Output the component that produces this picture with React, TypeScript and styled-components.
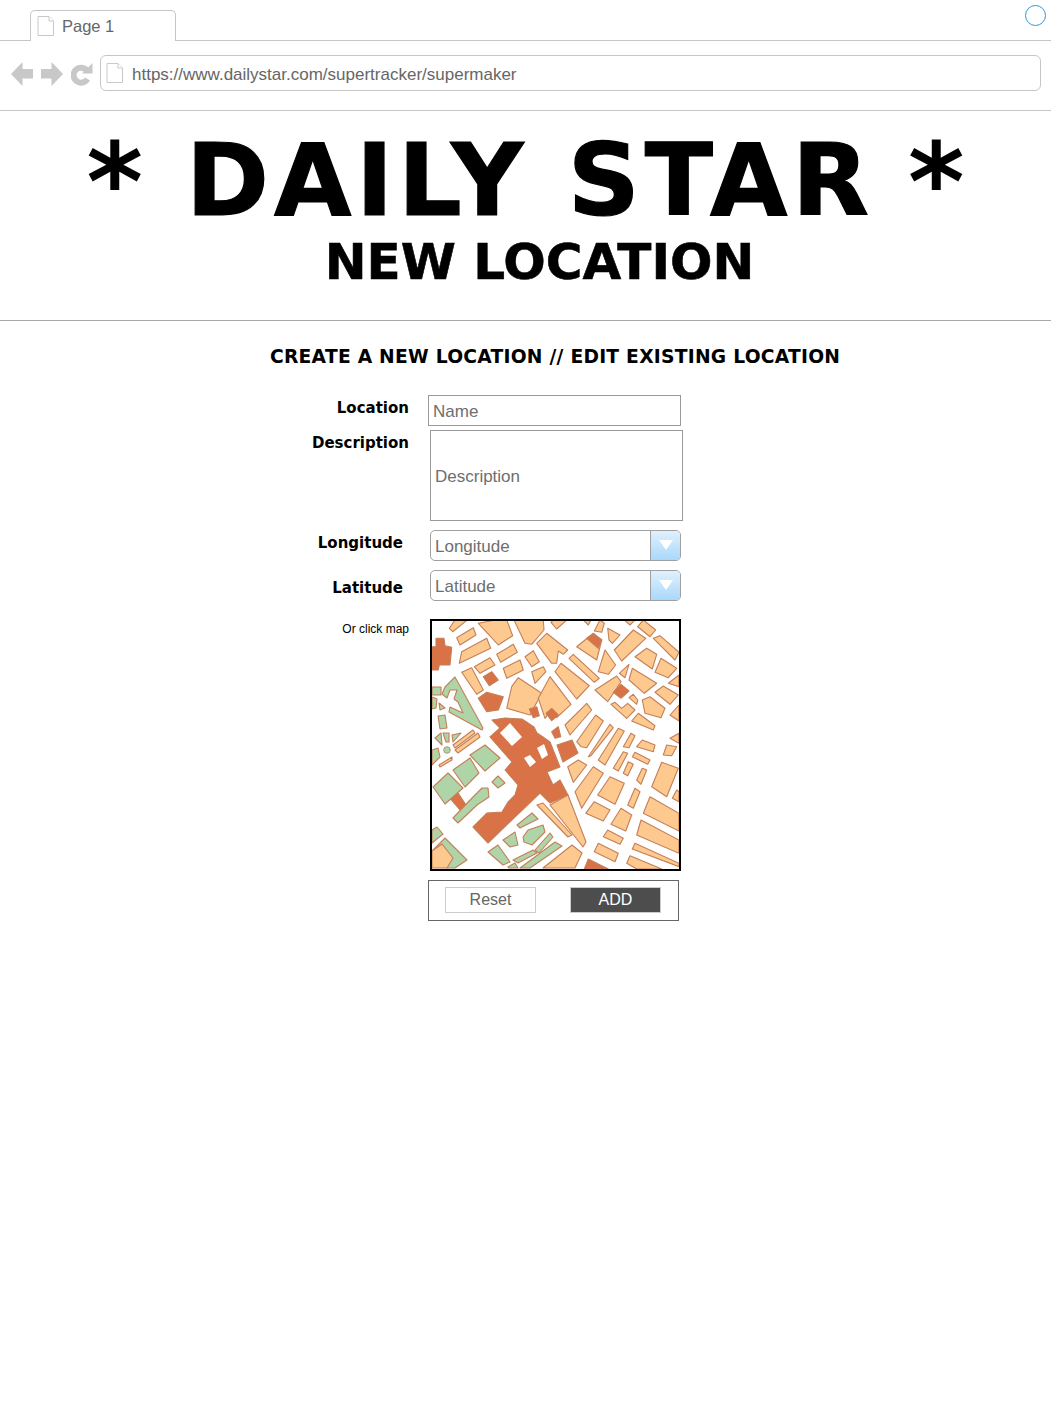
import React from 'react'
import styled, { createGlobalStyle } from 'styled-components'

const GlobalStyle = createGlobalStyle`
  html, body {
    margin: 0;
    padding: 0;
    background: #fff;
  }
  * {
    box-sizing: border-box;
  }
`

const Page = styled.div`
  width: 1051px;
  min-height: 1401px;
  font-family: 'Liberation Sans', Arial, sans-serif;
  background: #fff;
`

// browser chrome
const TabStrip = styled.div`
  height: 41px;
  padding: 10px 5px 0 30px;
  display: flex;
  justify-content: space-between;
  align-items: flex-start;
  border-bottom: 1px solid #c6c6c6;
`

const Tab = styled.div`
  width: 146px;
  height: 31px;
  display: flex;
  align-items: center;
  gap: 8px;
  padding: 0 0 0 6px;
  background: #fff;
  border: 1px solid #c6c6c6;
  border-bottom: none;
  border-radius: 5px 5px 0 0;
  color: #666;
  font-size: 16.5px;
`

const StatusRing = styled.div`
  width: 21px;
  height: 21px;
  margin-top: -5px;
  border: 1.5px solid #2f95d8;
  border-radius: 50%;
`

const AddressRow = styled.div`
  height: 70px;
  display: flex;
  align-items: center;
  padding: 0 10px 5px 11px;
  border-bottom: 1px solid #c6c6c6;
`

const NavIcons = styled.div`
  display: flex;
  align-items: center;
  gap: 8px;
  width: 89px;
  flex: none;
  margin-top: 2px;
`

const AddressBar = styled.div`
  flex: 1;
  height: 36px;
  display: flex;
  align-items: center;
  gap: 9px;
  padding: 0 0 0 5px;
  border: 1px solid #c6c6c6;
  border-radius: 6px;
  color: #666;
  font-size: 17px;

  span {
    margin-top: 3px;
  }
`

// masthead
const Masthead = styled.header`
  height: 210px;
  border-bottom: 1px solid #a8a8a8;
  font-family: 'DejaVu Sans', Verdana, sans-serif;
  font-weight: 700;
  color: #000;
  text-align: center;
`

const TitleRow = styled.div`
  display: flex;
  justify-content: center;
  align-items: flex-start;
  gap: 38px;
  height: 121px;
  padding-top: 20px;
  font-size: 100px;
  line-height: 100px;
`

const TitleText = styled.span`
  letter-spacing: 4.8px;
  margin-right: -4px;
  -webkit-text-stroke: 1.2px #000;
`

const Star = styled.span<{ $nudge: number }>`
  padding-top: 3px;
  margin-right: ${p => p.$nudge}px;
  font-size: 108px;
  line-height: 98px;
`

const SubTitle = styled.div`
  margin: 5px 0 0 28px;
  font-size: 50px;
  line-height: 50px;
  -webkit-text-stroke: 0.6px #000;
`

const Section = styled.h2`
  margin: 24px 0 0;
  padding-left: 270px;
  font-family: 'DejaVu Sans', Verdana, sans-serif;
  font-size: 18.7px;
  line-height: 24px;
  font-weight: 700;
  letter-spacing: 0.25px;
  color: #000;
  white-space: nowrap;
`

const Form = styled.div`
  margin-top: 26px;
`

const Row = styled.div<{ $top: number; $height: number; $labelEnd: number; $fieldStart: number }>`
  display: flex;
  align-items: flex-start;
  margin-top: ${p => p.$top}px;
  height: ${p => p.$height}px;
  padding-left: 200px;

  & > :first-child {
    width: ${p => p.$labelEnd - 200}px;
  }
  & > :last-child {
    margin-left: ${p => p.$fieldStart - p.$labelEnd}px;
  }
`

const Label = styled.div<{ $offset: number }>`
  padding-top: ${p => p.$offset}px;
  font-family: 'DejaVu Sans', Verdana, sans-serif;
  font-size: 15px;
  line-height: 20px;
  font-weight: 700;
  color: #000;
  text-align: right;
`

const MapLabel = styled.div`
  padding-top: 2px;
  font-size: 12px;
  line-height: 16px;
  color: #000;
  text-align: right;
`

const TextField = styled.div`
  width: 253px;
  height: 31px;
  display: flex;
  align-items: center;
  padding: 3px 0 0 4px;
  border: 1px solid #999;
  color: #6e6e6e;
  font-size: 17px;
`

const TextArea = styled(TextField)`
  height: 91px;
`

const Select = styled.div`
  width: 251px;
  height: 31px;
  display: flex;
  align-items: center;
  justify-content: space-between;
  padding-left: 4px;
  border: 1px solid #a0a0a0;
  border-radius: 5px;
  overflow: hidden;
  color: #6e6e6e;
  font-size: 17px;

  span {
    padding-top: 2px;
  }
`

const SelectArrow = styled.div`
  width: 30px;
  height: 100%;
  display: flex;
  align-items: center;
  justify-content: center;
  padding-bottom: 2px;
  border-left: 1px solid #a0a0a0;
  background: linear-gradient(#e0f0fd, #a9d8fb);
`

const MapFrame = styled.div`
  width: 251px;
  height: 252px;
  border: 2px solid #000;
  overflow: hidden;
  background: #fff;

  svg {
    display: block;
  }
`

const ButtonBox = styled.div`
  width: 251px;
  height: 41px;
  display: flex;
  align-items: center;
  justify-content: space-between;
  padding: 0 17px 1px 16px;
  border: 1px solid #666;
`

const ResetButton = styled.div`
  width: 91px;
  height: 26px;
  display: flex;
  align-items: center;
  justify-content: center;
  border: 1px solid #ccc;
  color: #666;
  font-size: 16px;
`

const AddButton = styled(ResetButton)`
  background: #4d4d4d;
  color: #fff;
`

const PageIcon = () => (
  <svg width="17" height="20" viewBox="0 0 17 20" fill="#fff" stroke="#c9c9c9" strokeWidth="1">
    <path d="M1 .5h11l4.500 4.500v14.500h-15.500z" />
    <path d="M12 .5v4.500h4.500" />
  </svg>
)

const NavArrow = ({ flip }: { flip?: boolean }) => (
  <svg width="22" height="24" viewBox="0 0 22 24" fill="#c8c8c8" style={flip ? { transform: 'scaleX(-1)' } : undefined}>
    <path d="M0 12 11.500 0v7h10.500v9.500h-10.500v7.500z" />
  </svg>
)

const ReloadIcon = () => (
  <svg width="22" height="24" viewBox="0 0 22 24">
    <path d="M15.700 8.200a7.500 7.500 0 1 0 .8 8.800" fill="none" stroke="#c8c8c8" strokeWidth="6" />
    <path d="M11 11.500h10.500v-10.500z" fill="#c8c8c8" />
  </svg>
)

// map shapes. Most are written at 3x from the origin of the quadrant they were measured in
type Quad = { ox: number; oy: number; tone: string; scale?: number; shapes: string[] }

const toPoints = ({ ox, oy, scale = 3 }: Quad, shape: string) =>
  shape
    .split(' ')
    .map(pair => {
      const [x, y] = pair.split(',').map(Number)
      return `${(ox + x / scale).toFixed(1)},${(oy + y / scale).toFixed(1)}`
    })
    .join(' ')

const ORANGE = '#fdc98e'
const DARK = '#d97246'
const GREEN = '#aed4a8'
const WHITE = '#ffffff'

const QUADS: Quad[] = [
  {
    ox: 430, oy: 615, tone: ORANGE, shapes: [
      '58,40 75,15 112,15 68,50', '80,68 130,38 138,60 90,90',
      '145,25 195,15 230,15 248,62 205,90 168,50', '88,145 95,110 170,70 182,100',
      '200,118 250,88 262,112 212,142', '133,155 180,128 195,150 150,175',
      '220,160 270,135 280,165 230,190', '95,172 125,158 160,225 140,238',
      '252,15 340,15 342,45 305,88 285,85', '285,125 310,107 328,140 305,155',
      '320,85 350,55 413,105 400,118 385,108 380,145 365,145', '305,170 340,155 348,170 315,205',
      '230,280 245,215 265,188 335,235 300,300', '325,250 360,185 423,268 380,308 365,283 345,310',
    ],
  },
  {
    ox: 555, oy: 615, tone: ORANGE, shapes: [
      '-12,22 -5,15 35,15 5,42', '85,15 108,15 100,30', '118,48 135,15 148,25 140,52',
      '158,40 195,60 172,85 162,75', '65,95 115,55 140,75 125,135',
      '178,105 235,45 272,70 200,138', '208,15 240,15 225,30', '248,35 265,15 302,45 285,65',
      '295,70 315,62 372,112 360,135', '240,125 275,100 305,118 292,162',
      '300,172 318,130 365,160 340,188', '42,130 55,118 133,190 118,202',
      '0,170 18,145 103,212 65,252', '130,170 150,105 182,150 160,178', '193,175 222,148 210,188',
      '222,195 232,160 305,205 268,235', '340,205 372,180 372,215', '120,225 185,183 198,200 158,260',
      '300,232 325,213 370,240 345,268', '222,248 235,238 248,255 245,268',
      '262,255 285,245 330,280 318,308 270,295', '168,268 180,262 200,280 218,265 240,285 215,310',
      '230,318 250,295 300,332 295,345', '30,330 95,265 110,285 45,360',
      '65,380 122,300 145,318 95,398 78,395', '100,425 165,328 175,338 108,422',
      '130,435 190,340 208,348 150,450', '205,395 228,355 240,362 222,398',
      '245,395 262,375 300,390 295,410', '345,300 372,270 372,318', '345,370 372,355 372,385',
    ],
  },
  {
    ox: 555, oy: 745, tone: ORANGE, shapes: [
      '175,70 205,20 218,25 190,78', '205,85 220,50 235,58 218,92', '245,105 262,70 275,75 258,118',
      '232,35 240,22 285,45 278,58', '325,30 335,0 365,5 350,32', '290,125 320,52 370,70 335,155',
      '352,160 365,135 372,140 372,170', '38,65 70,45 95,60 55,112', '60,140 115,65 145,85 80,190',
      '128,150 165,95 208,115 180,178', '218,180 240,130 255,140 235,190', '92,205 118,170 165,195 145,228',
      '168,238 198,190 230,210 212,258', '265,205 285,155 372,205 372,258', '245,270 258,225 372,285 372,325',
      '232,312 240,295 372,355 372,365', '215,355 225,332 320,372 245,372', '145,275 158,255 205,280 195,298',
      '118,320 130,295 190,325 180,350',
    ],
  },
  {
    ox: 555, oy: 615, tone: DARK, shapes: ['95,70 115,57 140,75 130,100', '175,232 198,208 222,228 198,250'],
  },
  {
    ox: 430, oy: 615, tone: DARK, shapes: [
      '5,95 18,95 18,70 42,70 45,92 65,97 60,150 28,150 25,165 5,165', '160,185 185,170 205,195 178,212',
      '145,250 170,232 220,245 205,285 170,290', '298,282 320,275 328,302 310,308',
      '348,295 365,280 385,300 365,317', '365,350 385,335 392,365 375,370',
    ],
  },
  {
    ox: 430, oy: 745, tone: DARK, shapes: ['60,160 85,145 108,180 90,195'],
  },
  {
    ox: 555, oy: 745, tone: DARK, shapes: ['88,372 100,342 160,372'],
  },
  {
    // the main building and what belongs to it, in page pixels
    ox: 0, oy: 0, scale: 1, tone: DARK, shapes: [
      '492,720 505,718 522,719 534,727 537,733 543,737 550,742 560,767 547,772 553,785 560,780 568,795 550,803 540,793 488,843 473,827 487,813 502,812 508,802 515,795 518,785 505,770 512,762 490,737 500,728',
      '557,745 572,740 578,753 563,762',
    ],
  },
  {
    ox: 0, oy: 0, scale: 1, tone: WHITE, shapes: [
      '500,733 510,723 522,737 512,746', '524,758 530,755 536,762 530,767', '537,748 544,744 548,755 542,759',
    ],
  },
  {
    ox: 0, oy: 0, scale: 1, tone: ORANGE, shapes: [
      '537,805 543,803 572,835 568,837', '550,805 568,795 586,842 583,847', '543,868 572,845 582,853 575,868',
      '453,745 473,730 475,733 455,748', '455,750 478,733 480,737 458,753', '439,765 452,757 452,760 440,767',
    ],
  },
  {
    ox: 0, oy: 0, scale: 1, tone: GREEN, shapes: [
      '445,687 455,677 483,728 482,730 449,712 450,707 463,713 458,702 454,699 457,690 450,690 447,698 442,694',
      '432,687 441,687 441,695 432,695', '432,697 437,699 436,708 432,709', '439,703 445,708 440,710',
      '438,716 445,715 447,728 440,729', '435,738 441,733 442,745', '443,733 449,733 449,742 446,742',
      '452,735 461,733 453,742', '432,750 438,748 440,757 432,765',
      '470,755 485,745 500,758 485,771', '453,770 470,758 479,773 465,787', '433,787 448,773 463,788 445,804',
      '453,818 473,797 482,788 488,788 489,797 477,805 458,823', '492,782 498,776 505,783 498,788',
      '432,830 437,827 443,834 432,843', '432,851 445,838 467,860 455,868 447,868',
      '517,825 532,813 538,819 520,828', '523,837 528,830 543,825 545,832 532,845 524,842',
      '535,850 550,833 553,837 539,853', '503,840 515,832 518,845 510,847', '488,852 498,845 510,862 503,865',
      '513,860 533,850 537,853 518,863', '508,867 515,863 518,868 509,868', '520,868 555,842 562,846 530,868',
    ],
  },
  {
    ox: 0, oy: 0, scale: 1, tone: ORANGE, shapes: ['432,851 442,844 453,858 447,868 432,868'],
  },
]

const CityMap = () => (
  <svg width="247" height="248" viewBox="432 621 247 248">
    {QUADS.map((quad, i) => (
      <g key={i} fill={quad.tone} stroke={quad.tone === WHITE ? 'none' : '#c47f58'} strokeWidth="1.1" strokeLinejoin="round">
        {quad.shapes.map((shape, j) => (
          <polygon key={j} points={toPoints(quad, shape)} />
        ))}
      </g>
    ))}
    <circle cx="447" cy="750" r="3.300" fill={GREEN} stroke="#a8946f" strokeWidth="0.9" />
  </svg>
)

const Caret = () => (
  <svg width="14" height="10" viewBox="0 0 14 10">
    <path d="M0 0h14l-7 10z" fill="#fff" />
  </svg>
)

export default function App() {
  return (
    <Page>
      <GlobalStyle />
      <TabStrip>
        <Tab>
          <PageIcon />
          <span>Page 1</span>
        </Tab>
        <StatusRing />
      </TabStrip>
      <AddressRow>
        <NavIcons>
          <NavArrow />
          <NavArrow flip />
          <ReloadIcon />
        </NavIcons>
        <AddressBar>
          <PageIcon />
          <span>https://www.dailystar.com/supertracker/supermaker</span>
        </AddressBar>
      </AddressRow>

      <Masthead>
        <TitleRow>
          <Star $nudge={5}>*</Star>
          <TitleText>DAILY STAR</TitleText>
          <Star $nudge={0}>*</Star>
        </TitleRow>
        <SubTitle>NEW LOCATION</SubTitle>
      </Masthead>

      <Section>CREATE A NEW LOCATION // EDIT EXISTING LOCATION</Section>

      <Form>
        <Row $top={0} $height={31} $labelEnd={409} $fieldStart={428}>
          <Label $offset={3}>Location</Label>
          <TextField>Name</TextField>
        </Row>
        <Row $top={4} $height={91} $labelEnd={409} $fieldStart={430}>
          <Label $offset={3}>Description</Label>
          <TextArea>Description</TextArea>
        </Row>
        <Row $top={9} $height={31} $labelEnd={403} $fieldStart={430}>
          <Label $offset={3}>Longitude</Label>
          <Select>
            <span>Longitude</span>
            <SelectArrow><Caret /></SelectArrow>
          </Select>
        </Row>
        <Row $top={9} $height={31} $labelEnd={403} $fieldStart={430}>
          <Label $offset={8}>Latitude</Label>
          <Select>
            <span>Latitude</span>
            <SelectArrow><Caret /></SelectArrow>
          </Select>
        </Row>
        <Row $top={18} $height={252} $labelEnd={409} $fieldStart={430}>
          <MapLabel>Or click map</MapLabel>
          <MapFrame><CityMap /></MapFrame>
        </Row>
        <Row $top={9} $height={41} $labelEnd={409} $fieldStart={428}>
          <span />
          <ButtonBox>
            <ResetButton>Reset</ResetButton>
            <AddButton>ADD</AddButton>
          </ButtonBox>
        </Row>
      </Form>
    </Page>
  )
}
